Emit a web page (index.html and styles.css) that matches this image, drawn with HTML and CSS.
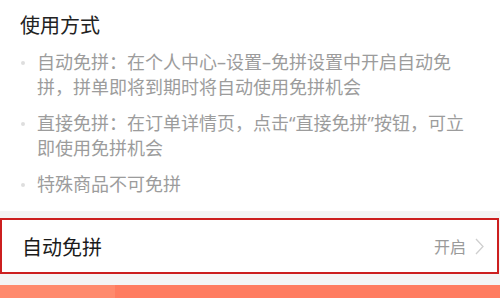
FILE: index.html
```html
<!DOCTYPE html>
<html lang="zh-CN">
<head>
<meta charset="utf-8">
<link rel="stylesheet" href="styles.css">
</head>
<body>
<section class="card">
  <h2 class="title">使用方式</h2>
  <ul class="rules">
    <li><span>自动免拼：在个人中心–设置–免拼设置中开启自动免拼，拼单即将到期时将自动使用免拼机会</span></li>
    <li><span>直接免拼：在订单详情页，点击“直接免拼”按钮，可立即使用免拼机会</span></li>
    <li><span>特殊商品不可免拼</span></li>
  </ul>
</section>
<div class="setting">
  <span class="setting-label">自动免拼</span>
  <span class="setting-value">开启
    <svg class="chev" width="9" height="17" viewBox="0 0 9 17"><path d="M1 1 L8 8.5 L1 16" fill="none" stroke="#cfcfcf" stroke-width="1.3"/></svg>
  </span>
</div>
<div class="bottom-bar"><div class="bar-light"></div></div>
</body>
</html>
```

FILE: styles.css
```css
html, body {
  margin: 0;
  padding: 0;
}
body {
  width: 500px;
  height: 298px;
  overflow: hidden;
  background: #f4f4f4;
  font-family: "Noto Sans", "Noto Sans CJK SC", sans-serif;
}
.card {
  background: #fff;
  padding: 12px 28px 14px 20px;
}
.title {
  margin: 0;
  font-size: 20px;
  line-height: 28px;
  font-weight: 400;
  color: #222;
}
.rules {
  list-style: none;
  margin: 10px 0 0;
  padding: 0;
  display: flex;
  flex-direction: column;
  gap: 11px;
}
.rules li {
  display: flex;
  font-size: 18px;
  line-height: 25px;
  color: #9c9c9c;
}
.rules li::before {
  content: "";
  flex: none;
  width: 4px;
  height: 4px;
  border-radius: 50%;
  background: #dedede;
  margin: 10.5px 12px 0 1px;
}
.setting {
  margin: 7px 1px 11px 0;
  height: 52px;
  border: 2px solid #cc1f1f;
  background: #fff;
  display: flex;
  align-items: center;
  justify-content: space-between;
  padding: 0 13px 0 20px;
}
.setting-label {
  font-size: 20px;
  color: #1a1a1a;
}
.setting-value {
  display: flex;
  align-items: center;
  gap: 9px;
  font-size: 16px;
  color: #9a9a9a;
}
.chev {
  display: block;
}
.bottom-bar {
  height: 13px;
  background: #ff7c60;
  display: flex;
}
.bar-light {
  width: 115px;
  background: #ff8a6d;
}
```
